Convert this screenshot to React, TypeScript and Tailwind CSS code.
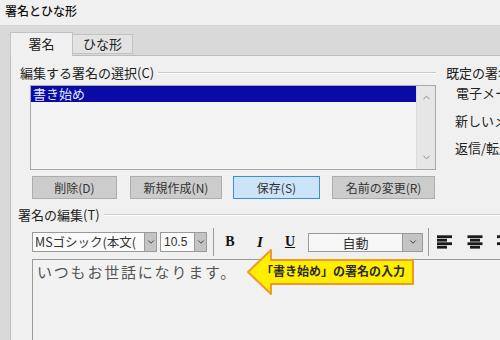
import { ChevronDown, ChevronUp } from "lucide-react";

function DropBtn({ w = "w-[12px]" }: { w?: string }) {
  return (
    <div className={`${w} h-full shrink-0 bg-[#c4c4c4] border-l border-[#9a9a9a] flex items-center justify-center`}>
      <ChevronDown size={10} strokeWidth={2.2} className="text-[#333]" />
    </div>
  );
}

function AlignIcon({ kind }: { kind: "left" | "center" | "right" }) {
  const rows = [15, 10, 15, 10];
  return (
    <svg width="16" height="14" viewBox="0 0 16 14">
      {rows.map((len, i) => {
        const x = kind === "left" ? 0 : kind === "center" ? (16 - len) / 2 : 16 - len;
        return <rect key={i} x={x} y={i * 3.5 + 0.3} width={len} height="2.8" fill="#1a1a1a" />;
      })}
    </svg>
  );
}

function GroupLabel({ text, className = "" }: { text: string; className?: string }) {
  return (
    <div className={`flex items-center h-[16px] ${className}`}>
      <span className="text-[13px] leading-[16px] text-[#222] whitespace-nowrap">{text}</span>
      <div className="flex-1 ml-[4px] border-t border-[#c9c9c9] border-b-white border-b h-0" />
    </div>
  );
}

export default function App() {
  return (
    <div className="w-[500px] h-[340px] overflow-hidden bg-[#f0f0f0] flex flex-col font-['Noto_Sans_CJK_JP','Noto_Sans',sans-serif] text-[#222]">
      {/* title */}
      <div className="h-[25px] pl-[5px] pt-[3px] text-[12px] leading-[16px] font-medium text-[#111]">
        署名とひな形
      </div>

      <div className="flex-1 bg-[#d9d9d9] flex flex-col pl-[10px]">
        {/* tabs */}
        <div className="h-[30px] flex items-end">
          <div className="w-[63px] h-[24px] bg-[#f0f0f0] border border-b-0 border-[#c2c2c2] flex items-center justify-center text-[13px] leading-[16px] relative z-10 -mb-px pb-[2px]">
            署名
          </div>
          <div className="w-[60px] h-[20px] mb-[1px] bg-[#e3e3e3] border border-l-0 border-[#c2c2c2] flex items-center justify-center text-[13px] leading-[16px]">
            ひな形
          </div>
        </div>

        {/* panel */}
        <div className="flex-1 bg-[#f0f0f0] border-l border-t border-[#bdbdbd] flex flex-col">
          <div className="flex">
            {/* left column */}
            <div className="w-[425px] shrink-0 flex flex-col pt-[9px]">
              <GroupLabel text="編集する署名の選択(C)" className="pl-[9px]" />
              <div className="ml-[19px] mt-[4px] w-[406px] h-[85px] border border-[#a8a8a8] bg-[#f4f4f4] flex">
                <div className="flex-1">
                  <div className="h-[16px] bg-[#0a0aa6] text-[#dfe6ff] text-[13px] leading-[16px] pl-[2px]">
                    書き始め
                  </div>
                </div>
                <div className="w-[19px] bg-[#e6e6e6] border-l border-[#dadada] flex flex-col items-center justify-between py-[6px]">
                  <ChevronUp size={11} strokeWidth={2} className="text-[#808080]" />
                  <ChevronDown size={11} strokeWidth={2} className="text-[#808080]" />
                </div>
              </div>

              {/* buttons */}
              <div className="flex ml-[21px] mt-[6px] h-[23px] text-[12px] leading-[16px] text-[#333]">
                <div className="w-[85px] bg-[#cccccc] border border-[#adadad] flex items-center justify-center">削除(D)</div>
                <div className="w-[92px] ml-[13px] bg-[#cccccc] border border-[#adadad] flex items-center justify-center">新規作成(N)</div>
                <div className="w-[87px] ml-[11px] bg-[#cce4f7] border border-[#3c8fd6] flex items-center justify-center">保存(S)</div>
                <div className="w-[103px] ml-[12px] bg-[#cccccc] border border-[#adadad] flex items-center justify-center">名前の変更(R)</div>
              </div>
            </div>

            {/* right column */}
            <div className="flex-1 pt-[9px] pl-[10px] whitespace-nowrap overflow-hidden text-[13px] leading-[16px]">
              <div className="h-[16px]">既定の署名の選択</div>
              <div className="pl-[10px] mt-[4px] h-[16px]">電子メール アカウント</div>
              <div className="pl-[9px] mt-[12px] h-[16px]">新しいメッセージ</div>
              <div className="pl-[9px] mt-[11px] h-[16px]">返信/転送</div>
            </div>
          </div>

          {/* section 2 */}
          <GroupLabel text="署名の編集(T)" className="pl-[7px] mt-[8px]" />

          {/* toolbar */}
          <div className="flex items-center mt-[9px] h-[20px] ml-[21px] whitespace-nowrap">
            <div className="w-[125px] shrink-0 h-[20px] bg-[#fafafa] border border-[#9a9a9a] flex">
              <div className="flex-1 min-w-0 overflow-hidden text-[12.5px] leading-[18px] pl-[2px] text-[#333]">MSゴシック(本文(</div>
              <DropBtn />
            </div>
            <div className="w-[47px] shrink-0 h-[20px] ml-[3px] bg-[#fafafa] border border-[#9a9a9a] flex">
              <div className="flex-1 min-w-0 text-[12px] leading-[18px] pl-[3px] text-[#333] font-['Liberation_Sans',sans-serif]">10.5</div>
              <DropBtn />
            </div>
            <div className="w-px shrink-0 h-[28px] bg-[#9a9a9a] ml-[6px]" />
            <div className="ml-[9px] w-[14px] shrink-0 text-center font-['Liberation_Serif',serif] font-bold text-[14px] leading-[18px] text-[#111]">B</div>
            <div className="ml-[16px] w-[14px] shrink-0 text-center font-['Liberation_Serif',serif] font-bold italic text-[15px] leading-[18px] text-[#111]">I</div>
            <div className="ml-[16px] w-[14px] shrink-0 text-center font-['Liberation_Serif',serif] font-bold underline text-[14px] leading-[18px] text-[#111]">U</div>
            <div className="ml-[11px] w-[115px] shrink-0 h-[19px] bg-[#f7f7f7] border border-[#9a9a9a] flex">
              <div className="flex-1 text-center text-[13px] leading-[17px] text-[#333]">自動</div>
              <DropBtn w="w-[20px]" />
            </div>
            <div className="w-px shrink-0 h-[28px] bg-[#9a9a9a] ml-[5px]" />
            <div className="ml-[8px] shrink-0 flex items-center">
              <AlignIcon kind="left" />
            </div>
            <div className="ml-[14px] shrink-0 flex items-center">
              <AlignIcon kind="center" />
            </div>
            <div className="ml-[13px] shrink-0 flex items-center">
              <AlignIcon kind="right" />
            </div>
          </div>

          {/* text area */}
          <div className="relative flex-1 mt-[7px] ml-[21px] border-l border-t border-[#9a9a9a] bg-[#f2f2f2]">
            <div className="pl-[4px] pt-[2px] text-[15px] leading-[20px] tracking-[1.8px] text-[#555]">
              いつもお世話になります。
            </div>

            {/* callout arrow */}
            <div className="absolute left-[212px] top-[-12px] w-[172px] h-[50px]">
              <svg width="172" height="50" viewBox="0 0 172 50" className="absolute inset-0">
                <polygon
                  points="3,24 26,2 26,12 168,12 168,36 26,36 26,46"
                  fill="#ffee00"
                  stroke="#ee9a2a"
                  strokeWidth="2"
                  strokeLinejoin="round"
                />
              </svg>
              <div className="absolute left-[16px] top-[15px] text-[12px] leading-[16px] font-bold text-[#2a2a2a] whitespace-nowrap">
                「書き始め」の署名の入力
              </div>
            </div>
          </div>
        </div>
      </div>
    </div>
  );
}
